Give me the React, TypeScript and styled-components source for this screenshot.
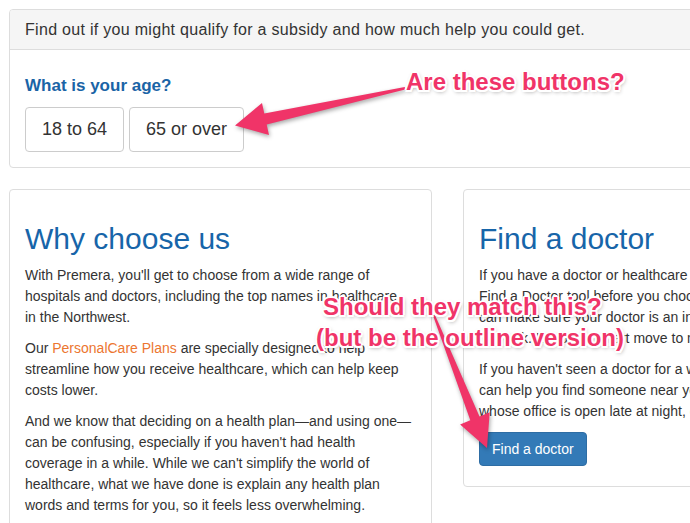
import React from 'react';
import styled, { createGlobalStyle } from 'styled-components';

const GlobalStyle = createGlobalStyle`
  html, body {
    margin: 0;
    padding: 0;
    background: #fff;
    overflow: hidden;
  }
  body {
    font-family: 'Liberation Sans', Helvetica, Arial, sans-serif;
    font-size: 14px;
    line-height: 21px;
    color: #333;
  }
  * {
    box-sizing: border-box;
  }
`;

const Page = styled.div`
  position: relative;
  width: 980px;
  height: 523px;
  padding: 9px 0 0 9px;
`;

const Panel = styled.div<{ $width: number }>`
  width: ${(p) => p.$width}px;
  border: 1px solid #ddd;
  border-radius: 4px;
  background: #fff;
`;

const QualifyPanel = styled(Panel)`
  margin-bottom: 21px;
`;

const PanelHeading = styled.div`
  padding: 9px 15px 8px;
  font-size: 16px;
  line-height: 22px;
  letter-spacing: 0.3px;
  background: #f5f5f5;
  border-bottom: 1px solid #ddd;
  border-radius: 3px 3px 0 0;
`;

const PanelBody = styled.div`
  padding: 15px;
`;

const Question = styled.h4`
  margin: 11px 0;
  font-size: 17px;
  line-height: 20px;
  font-weight: 700;
  color: #1a64a6;
`;

const ChoiceRow = styled.div`
  display: flex;
  gap: 5px;
`;

const ChoiceButton = styled.button`
  display: inline-flex;
  align-items: center;
  height: 45px;
  padding: 0 16px;
  font-family: inherit;
  font-size: 18px;
  color: #333;
  background: #fff;
  border: 1px solid #ccc;
  border-radius: 4px;
  cursor: pointer;
`;

const Columns = styled.div`
  display: flex;
  align-items: flex-start;
  gap: 31px;
`;

const CardBody = styled.div`
  padding: 12px 15px 20px;
  white-space: nowrap;
`;

const CardTitle = styled.h2`
  margin: 20px 0 10px;
  font-size: 30px;
  line-height: 33px;
  font-weight: 400;
  color: #1765a9;
`;

const Text = styled.p`
  margin: 0 0 10px;
`;

const Highlight = styled.a`
  color: #ec7630;
  text-decoration: none;
`;

const PrimaryButton = styled.button`
  padding: 6px 12px;
  font-family: inherit;
  font-size: 14px;
  line-height: 20px;
  color: #fff;
  background: #337ab7;
  border: 1px solid #2e6da4;
  border-radius: 4px;
  cursor: pointer;
`;

// annotation layer drawn over the screenshot
const Overlay = styled.svg`
  position: absolute;
  left: 0;
  top: 0;
  width: 690px;
  height: 523px;
  pointer-events: none;
  filter: drop-shadow(1px 2px 2px rgba(0, 0, 0, 0.35));
`;

const Callout = styled.div<{ $left: number; $top: number }>`
  position: absolute;
  left: ${(p) => p.$left}px;
  top: ${(p) => p.$top}px;
  font-size: 24px;
  line-height: 24px;
  font-weight: 700;
  color: #f03468;
  white-space: nowrap;
  text-shadow: -2px 0 #fff, 2px 0 #fff, 0 -2px #fff, 0 2px #fff,
    -1.5px -1.5px #fff, 1.5px -1.5px #fff, -1.5px 1.5px #fff, 1.5px 1.5px #fff,
    1px 2px 4px rgba(0, 0, 0, 0.45);
`;

const arrows = [
  '404.8,87 405.2,89.5 266.7,124.4 269,135 235,125.5 262,103 264.3,113.6',
  '432.1,313 433.9,312.4 479.5,416.5 489.7,412.3 487,448 460.1,424.5 470.3,420.3',
];

const App: React.FC = () => {
  return (
    <>
      <GlobalStyle />
      <Page>
        <QualifyPanel $width={960}>
          <PanelHeading>
            Find out if you might qualify for a subsidy and how much help you could get.
          </PanelHeading>
          <PanelBody>
            <Question>What is your age?</Question>
            <ChoiceRow>
              <ChoiceButton>18 to 64</ChoiceButton>
              <ChoiceButton>65 or over</ChoiceButton>
            </ChoiceRow>
          </PanelBody>
        </QualifyPanel>

        <Columns>
          <Panel $width={423}>
            <CardBody>
              <CardTitle>Why choose us</CardTitle>
              <Text>
                With Premera, you'll get to choose from a wide range of
                <br />
                hospitals and doctors, including the top names in healthcare
                <br />
                in the Northwest.
              </Text>
              <Text>
                Our <Highlight href="#">PersonalCare Plans</Highlight> are specially designed to help
                <br />
                streamline how you receive healthcare, which can help keep
                <br />
                costs lower.
              </Text>
              <Text>
                And we know that deciding on a health plan—and using one—
                <br />
                can be confusing, especially if you haven't had health
                <br />
                coverage in a while. While we can't simplify the world of
                <br />
                healthcare, what we have done is explain any health plan
                <br />
                words and terms for you, so it feels less overwhelming.
              </Text>
            </CardBody>
          </Panel>

          <Panel $width={423}>
            <CardBody>
              <CardTitle>Find a doctor</CardTitle>
              <Text>
                If you have a doctor or healthcare provider you like, use our
                <br />
                Find a Doctor tool before you choose a plan. That way, you
                <br />
                can make sure your doctor is an in-
                <br />
                network. It's just a smart move to make.
              </Text>
              <Text>
                If you haven't seen a doctor for a while, the tool
                <br />
                can help you find someone near you, even someone
                <br />
                whose office is open late at night, or on weekends.
              </Text>
              <PrimaryButton>Find a doctor</PrimaryButton>
            </CardBody>
          </Panel>
        </Columns>

        <Overlay viewBox="0 0 690 523">
          {arrows.map((pts) => (
            <polygon key={pts} points={pts} fill="#f03468" />
          ))}
        </Overlay>

        <Callout $left={406} $top={70}>Are these buttons?</Callout>
        <Callout $left={323} $top={295}>Should they match this?</Callout>
        <Callout $left={316} $top={326}>(but be the outline version)</Callout>
      </Page>
    </>
  );
};

export default App;
